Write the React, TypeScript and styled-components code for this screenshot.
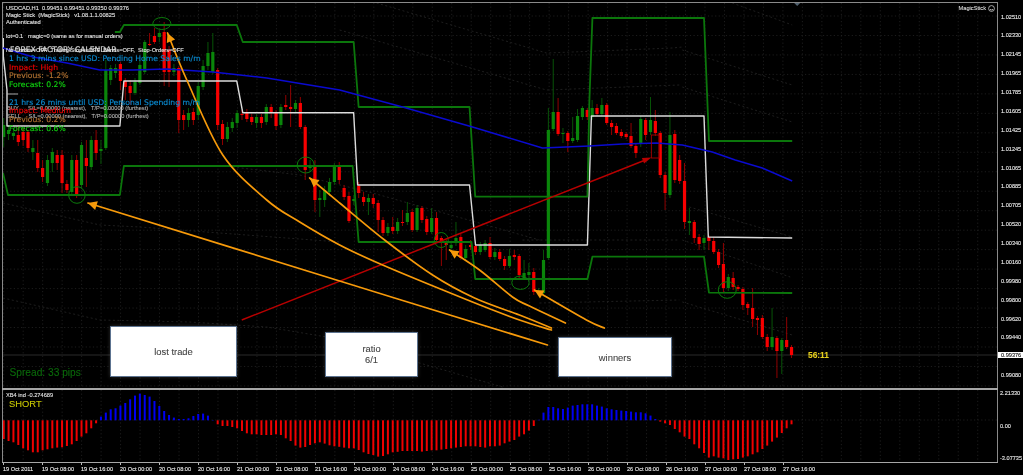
import React from "react";
import styled, { createGlobalStyle } from "styled-components";

const Global = createGlobalStyle`
  html, body { margin: 0; padding: 0; background: #000; overflow: hidden; }
  #root { width: 1023px; height: 475px; }
`;

const SANS = `"Liberation Sans", Arial, sans-serif`;
const WIDE = `"DejaVu Sans", Verdana, sans-serif`;
const STEP = 4.868;
const barX = (k: number) => 3.7 + STEP * k;

// colour, top of body, bottom of body, high, low
type C = [string, number, number, number?, number?];
const candles: C[] = [
  ["g",125,137,118,147],["g",130,134,125,140],["g",133,136,128,140],["r",135,142,125,146],["r",132,140,128,146],["r",132,148,130,152],["g",148,152,140,160],["r",153,168,140,172],
  ["r",168,177,160,182],["g",160,183,155,186],["g",152,163,148,172],["r",155,163,150,170],["r",155,183,150,193],["r",184,190,180,193],["g",160,192,155,194],["r",160,195,155,198],
  ["g",145,185,142,188],["r",158,166,140,187],["g",140,167,136,170],["r",140,153,130,160],["g",149,151,140,164],["g",70,148,60,150],["g",68,80,65,85],["g",68,73,64,78],
  ["r",64,81,62,90],["r",81,87,78,100],["r",86,93,80,105],["g",82,93,78,95],["g",65,83,60,85],["g",42,72,40,74],["r",44,45,33,46],["r",36,42,28,44],
  ["g",33,37,30,42],["r",32,72,22,86],["r",50,72,46,87],["g",68,72,64,76],["r",68,120,66,133],["r",115,120,110,130],["g",113,120,108,127],["r",112,120,108,125],
  ["g",86,115,82,120],["g",66,87,60,90],["g",53,66,42,70],["g",52,72,33,74],["r",70,125,68,130],["r",124,139,120,145],["g",127,139,122,142],["g",122,128,118,132],
  ["g",113,123,110,128],["r",114,115,110,120],["r",112,119,109,122],["r",117,122,114,125],["g",117,123,114,128],["r",117,123,114,128],["g",107,122,104,125],["r",107,113,104,118],
  ["r",113,126,110,130],["g",107,125,104,128],["r",105,107,95,110],["r",107,109,85,127],["g",103,109,100,112],["r",103,127,97,129],["r",127,170,125,180],["g",165,168,160,172],
  ["r",165,200,160,212],["g",198,200,190,217],["g",190,200,186,207],["g",182,192,178,196],["g",167,182,163,185],["r",165,180,162,184],["r",188,197,185,200],["r",196,221,192,223],
  ["g",199,201,195,205],["r",186,193,182,198],["r",197,202,192,206],["g",198,202,194,215],["r",198,204,194,208],["r",203,220,200,232],["r",220,233,217,236],["g",227,233,223,236],
  ["r",227,231,217,234],["g",222,231,218,234],["r",222,223,210,226],["g",213,222,202,225],["r",212,230,209,232],["g",208,230,205,232],["r",208,220,206,223],["r",219,232,216,235],
  ["g",218,232,208,234],["r",218,240,212,242],["r",238,243,236,266],["r",242,245,240,260],["g",245,248,242,252],["g",238,243,222,246],["r",237,258,234,260],["g",249,258,245,260],
  ["r",245,247,240,250],["r",246,252,244,255],["g",245,252,242,255],["g",243,250,240,252],["r",243,257,237,259],["g",252,257,248,260],["r",252,259,249,261],["r",259,266,256,270],
  ["g",256,266,249,268],["r",255,257,250,260],["r",256,275,254,278],["g",273,278,260,280],["g",272,275,263,278],["r",272,292,268,295],["g",291,293,288,296],["g",260,293,250,295],
  ["g",130,258,108,260],["g",112,129,59,131],["r",112,134,98,136],["g",133,134,128,143],["r",133,141,131,152],["g",138,141,117,143],["g",116,140,109,142],["g",108,117,106,120],
  ["r",110,117,108,120],["g",108,117,100,120],["r",108,114,104,116],["g",105,114,98,116],["r",105,123,103,125],["r",123,127,120,135],["r",126,133,123,135],["r",132,136,129,138],
  ["r",134,137,132,139],["r",136,146,123,148],["r",146,153,144,158],["g",119,144,116,147],["r",120,135,118,140],["g",120,132,97,135],["r",121,133,110,136],["r",133,175,131,178],
  ["r",175,193,172,210],["g",135,195,112,198],["r",134,180,130,183],["r",160,181,155,184],["r",181,222,163,229],["g",221,223,208,235],["r",222,238,220,243],["r",237,244,234,250],
  ["g",238,243,235,250],["r",237,241,235,250],["r",241,252,237,254],["r",252,265,249,268],["r",264,288,243,292],["g",277,288,274,291],["r",278,287,272,290],["r",287,289,285,291],
  ["r",289,305,287,310],["r",304,308,302,315],["r",308,319,288,327],["r",318,320,316,335],["r",318,337,315,339],["r",337,347,334,351],["g",337,347,308,350],["r",338,351,336,378],
  ["g",340,351,338,374],["r",340,347,317,349],["r",347,355,345,358],
];

// positive: blue, negative: red, in px from the zero line
const histogram: number[] = [
  -18.7,-20.7,-22,-24.7,-28,-30,-32,-32,-30,-29,-28,-27.3,-27,-25.7,-24,-20.7,-16.3,-13,-8,-3,
  3.7,7.7,11,12,14.7,17.3,21,24.7,26.7,25.3,23.7,19.3,14.3,9.3,5.3,2.7,1.3,1.3,2,4.3,6.3,6.7,4.7,0.3,
  -4,-5.7,-5.7,-6.7,-8,-10.7,-13,-14,-14,-14.7,-14.7,-14.7,-14,-14.7,-18,-20.7,-25.3,-27.3,-26.7,-24.7,-23,-22,-23.3,-25,-26,-26.5,
  -27.3,-28,-28,-29.7,-32,-33.7,-34.7,-36.3,-35.7,-34,-32,-31.5,-30.7,-30.7,-30.7,-30.7,-31.3,-30.7,-30,-30,-29.3,-28.7,-28,-27.3,-26.7,-26,-26,-26,-26.7,-27.3,-26,-26,-25.3,-23,-21.3,-19.7,-16.3,-14,-10.3,-5.7,
  0.5,7.7,13.3,13.3,12,11.3,12.7,14.7,15.3,16,16,16,14.7,13.7,12,11,10.3,9.7,9.3,8.7,8,8,7,4.7,1.3,
  -1.3,-3,-4.7,-8.7,-12,-16.3,-18.7,-24,-28,-32.7,-37.3,-36,-37.3,-38,-39.7,-39,-38.7,-37.3,-36,-34,-32,-28.7,-25.3,-21.3,-17.3,-12.7,-8,-4,
];

type P = [number, number];
const upperGreen: P[] = [[115,32],[120,32],[124,25],[237,25],[243,42],[354,42],[359,107],[470,107],[475.7,196.7],[588,196.7],[590,100],[593,18],[704.7,18],[709.7,141],[793,141]];
const lowerGreen: P[] = [[3,173],[8,195],[120,195],[124,166],[353,166],[359,242],[472,242],[475.7,279],[588,279],[593,256.7],[704.7,256.7],[709.7,292.7],[793,293]];
const whiteStep: P[] = [[3.3,38],[3.3,56],[7,90],[7,126],[120,126],[124,81],[237,81],[243,112.7],[354,112.7],[358,185],[470,185],[476,245],[588,245],[592,116],[704.7,116],[709,237],[793,238]];
const blueAverage: P[] = [[3,48],[33,57],[67,63],[100,70],[133,70],[167,69],[213,72],[267,78],[340,90],[403,107],[473,127],[543,148],[590,146],[623,144],[657,143],[683,145],[713,152],[736,160],[763,168],[793,181]];
const channels: P[][] = [
  [[377,3],[547,53],[573,52],[673,48],[683,47]],
  [[733,3],[793,25]],
  [[340,30],[547,90],[680,85]],
  [[683,50],[793,85]],
  [[683,87],[793,122]],
  [[3,203],[100,225],[140,227],[340,242]],
  [[3,298],[100,320],[190,322],[267,327],[333,338],[420,363],[503,387]],
  [[233,167],[300,175],[373,193],[540,240]],
  [[523,240],[680,240]],
  [[690,207],[793,237]],
  [[683,240],[791,277]],
  [[683,302],[793,335]],
  [[540,303],[680,300]],
];
const circles = [
  [162, 23.5, 9, 6],
  [77, 195, 8.3, 8.3],
  [306, 165, 8.5, 8],
  [441.7, 240, 7, 7.5],
  [521, 282.7, 8.7, 6.7],
  [728, 290, 9, 8.3],
];
const orangeArrows: P[][] = [
  [[167.7,33],[187,80],[223,155],[267,200],[300,222],[340,245],[383,265],[468,300],[520,320],[552,330]],
  [[310,178],[340,203],[385,240],[433,275],[475,298],[520,315],[552,328]],
  [[450,250],[480,270],[513,297],[530,306],[566,323]],
  [[535,290],[587,320],[605,328]],
  [[88,203],[340,281],[548,345]],
];
const prices = ["1.02510","1.02330","1.02145","1.01965","1.01785","1.01605","1.01425","1.01245","1.01065","1.00885","1.00705","1.00520","1.00340","1.00160","0.99980","0.99800","0.99620","0.99440","0.99260","0.99080"];
const times = ["19 Oct 2011","19 Oct 08:00","19 Oct 16:00","20 Oct 00:00","20 Oct 08:00","20 Oct 16:00","21 Oct 00:00","21 Oct 08:00","21 Oct 16:00","24 Oct 00:00","24 Oct 08:00","24 Oct 16:00","25 Oct 00:00","25 Oct 08:00","25 Oct 16:00","26 Oct 00:00","26 Oct 08:00","26 Oct 16:00","27 Oct 00:00","27 Oct 08:00","27 Oct 16:00"];

const pts = (p: P[]) => p.map((q) => q.join(",")).join(" ");
const smooth = (p: P[]) => {
  let d = `M${p[0][0]} ${p[0][1]}`;
  for (let i = 0; i < p.length - 1; i++) {
    const a = p[Math.max(i - 1, 0)], b = p[i], c = p[i + 1], e = p[Math.min(i + 2, p.length - 1)];
    d += ` C${(b[0] + (c[0] - a[0]) / 6).toFixed(1)} ${(b[1] + (c[1] - a[1]) / 6).toFixed(1)} ${(c[0] - (e[0] - b[0]) / 6).toFixed(1)} ${(c[1] - (e[1] - b[1]) / 6).toFixed(1)} ${c[0]} ${c[1]}`;
  }
  return d;
};
const head = (tip: P, next: P, size = 9, half = 4.5) => {
  const dx = next[0] - tip[0], dy = next[1] - tip[1], l = Math.hypot(dx, dy);
  const ux = dx / l, uy = dy / l;
  const bx = tip[0] + ux * size, by = tip[1] + uy * size;
  return `${tip[0]},${tip[1]} ${bx - uy * half},${by + ux * half} ${bx + uy * half},${by - ux * half}`;
};

const Window = styled.div`
  width: 1023px;
  height: 475px;
  box-sizing: border-box;
  padding: 2px 0 2px 2px;
  background: #000;
  display: flex;
  flex-direction: column;
  font-family: ${SANS};
  -webkit-text-stroke: 0.1px;
  filter: blur(0.35px);
`;
const PaneRow = styled.div<{ $h: number }>`
  display: flex;
  height: ${(p) => p.$h}px;
  flex: none;
`;
const Plot = styled.div<{ $top?: boolean }>`
  position: relative;
  width: 996px;
  box-sizing: border-box;
  border-left: 1px solid #8a8a8a;
  border-top: ${(p) => (p.$top ? "1px solid #8a8a8a" : "none")};
  border-right: 1px solid #8a8a8a;
  overflow: hidden;
`;
const Drawing = styled.svg`
  display: block;
  width: 100%;
  height: 100%;
`;
const PaneDivider = styled.div`
  height: 2px;
  flex: none;
  width: 996px;
  background: #a6a6a6;
`;
const PriceAxis = styled.div`
  position: relative;
  flex: 1;
  display: flex;
  flex-direction: column;
  padding-top: 8.5px;
  color: #ececec;
  font-size: 5.6px;
`;
const PriceLabel = styled.div`
  height: 19.47px;
  line-height: 13px;
  padding-left: 3px;
  white-space: nowrap;
`;
const PriceTag = styled.div`
  position: absolute;
  left: 0;
  top: 349.5px;
  width: 25px;
  height: 6px;
  background: #fff;
  color: #111;
  line-height: 6px;
  padding-left: 3px;
  box-sizing: border-box;
`;
const SubAxis = styled.div`
  flex: 1;
  display: flex;
  flex-direction: column;
  justify-content: space-between;
  color: #ececec;
  font-size: 5.6px;
  line-height: 6px;
  padding: 0 0 1px 2px;
  white-space: nowrap;
  overflow: hidden;
`;
const TimeAxis = styled.div`
  flex: none;
  display: flex;
  width: 996px;
  box-sizing: border-box;
  border-top: 1px solid #a6a6a6;
  padding: 2.5px 0 0 1px;
  color: #ececec;
  font-size: 5.6px;
  line-height: 7px;
`;
const TimeLabel = styled.div`
  position: relative;
  width: 39px;
  flex: none;
  white-space: nowrap;
  &::before {
    content: "";
    position: absolute;
    left: 0;
    top: -2.5px;
    width: 1px;
    height: 2px;
    background: #bbb;
  }
`;
const InfoBlock = styled.div`
  position: absolute;
  left: 3px;
  top: 1.5px;
  display: flex;
  flex-direction: column;
  color: #e4e4e4;
  font-size: 5.7px;
  line-height: 7px;
  white-space: pre;
`;
const InfoRow = styled.div<{ $skip?: number }>`
  margin-top: ${(p) => (p.$skip ?? 0) * 7}px;
`;
const CalendarBlock = styled.div`
  position: absolute;
  left: 6px;
  top: 43px;
  display: flex;
  flex-direction: column;
  font-family: ${WIDE};
  font-size: 7.65px;
  line-height: 8.75px;
  -webkit-text-stroke: 0.15px;
  white-space: pre;
`;
const CalendarTitle = styled.div`
  color: #dcdcdc;
  margin-left: 1px;
`;
const CalendarRow = styled.div<{ $color: string; $gap?: boolean }>`
  color: ${(p) => p.$color};
  margin-top: ${(p) => (p.$gap ? "8.75px" : "0")};
`;
const OrderBlock = styled.div`
  position: absolute;
  left: 4px;
  top: 102px;
  display: flex;
  flex-direction: column;
  color: #b4b4b4;
  font-size: 5.7px;
  line-height: 7.5px;
  white-space: pre;
`;
const Expert = styled.div`
  position: absolute;
  right: 2px;
  top: 2px;
  display: flex;
  align-items: center;
  gap: 2px;
  color: #dcdcdc;
  font-size: 5.7px;
  line-height: 7px;
`;
const Spread = styled.div`
  position: absolute;
  left: 6.5px;
  top: 364px;
  color: #0a6a0a;
  font-size: 10.2px;
  line-height: 12px;
`;
const Countdown = styled.div`
  position: absolute;
  left: 805px;
  top: 347px;
  color: #e6cf1e;
  font-size: 8.4px;
  font-weight: 700;
  line-height: 10px;
`;
const NoteBox = styled.div<{ $l: number; $t: number; $w: number; $h: number }>`
  position: absolute;
  left: ${(p) => p.$l}px;
  top: ${(p) => p.$t}px;
  width: ${(p) => p.$w}px;
  height: ${(p) => p.$h}px;
  box-sizing: border-box;
  display: flex;
  align-items: center;
  justify-content: center;
  text-align: center;
  background: #fff;
  border: 1px solid #5c7390;
  box-shadow: 0 0 4px rgba(120, 120, 120, 0.35);
  color: #444;
  font-size: 9.4px;
  line-height: 11px;
`;
const IndicatorTitle = styled.div`
  position: absolute;
  left: 3px;
  top: 1.5px;
  color: #e0e0e0;
  font-size: 5.7px;
  line-height: 7px;
`;
const Signal = styled.div`
  position: absolute;
  left: 6px;
  top: 8px;
  color: #c8c800;
  font-size: 9.4px;
  line-height: 11px;
`;

const GridLines = ({ y0, y1, rows }: { y0: number; y1: number; rows: number[] }) => (
  <g stroke="#242424" strokeWidth="0.8" strokeDasharray="1.2 2.4">
    {Array.from({ length: 51 }, (_, i) => (
      <line key={i} x1={3.7 + 19.5 * i} x2={3.7 + 19.5 * i} y1={y0} y2={y1} />
    ))}
    {rows.map((y) => (
      <line key={y} x1={3} x2={998} y1={y} y2={y} />
    ))}
  </g>
);

const Candles = () => (
  <g>
    {candles.map(([c, top, bot, hi, lo], k) => {
      const x = barX(k);
      const col = c === "r" ? "#f80000" : "#0a860a";
      const wick = c === "r" ? "#a00000" : "#085c08";
      return (
        <g key={k}>
          <line x1={x} x2={x} y1={hi ?? top - 3} y2={lo ?? bot + 3} stroke={wick} strokeWidth="0.9" />
          <rect x={x - 1.6} y={top} width={3.2} height={Math.max(bot - top, 1)} fill={col} />
        </g>
      );
    })}
  </g>
);

const MainDrawing = () => (
  <Drawing viewBox="3 3 995 385" preserveAspectRatio="none">
    <GridLines y0={3} y1={388} rows={prices.map((_, i) => 16 + 19.47 * i)} />
    <g fill="none" stroke="#262626" strokeWidth="0.8" strokeDasharray="2 2.5">
      {channels.map((c, i) => (
        <polyline key={i} points={pts(c)} />
      ))}
    </g>
    <line x1={3} x2={998} y1={355} y2={355} stroke="#2a2a2a" strokeWidth="1" />
    <polygon points="795,3 801,3 798,6" fill="#50606e" />
    <Candles />
    <g fill="none" strokeLinejoin="round">
      <polyline points={pts(whiteStep)} stroke="#dcdcdc" strokeWidth="1.4" />
      <line x1={7} y1={94} x2={18} y2={94} stroke="#bbb" strokeWidth="0.9" />
      <polyline points={pts(upperGreen)} stroke="#0b760b" strokeWidth="1.8" />
      <polyline points={pts(lowerGreen)} stroke="#0b760b" strokeWidth="1.8" />
      <polyline points={pts(blueAverage)} stroke="#0a0ad0" strokeWidth="1.5" />
    </g>
    <g fill="none" stroke="#0b7a0b" strokeWidth="1">
      {circles.map(([cx, cy, rx, ry]) => (
        <ellipse key={cx} cx={cx} cy={cy} rx={rx} ry={ry} />
      ))}
    </g>
    <line x1={242} y1={320} x2={646} y2={160} stroke="#b80000" strokeWidth="1.5" />
    <polygon points={head([652, 157.5], [242, 320], 9, 3)} fill="#b80000" />
    <rect x={652} y={135} width={8} height={23} fill="none" stroke="#a80000" strokeWidth="0.9" />
    <g fill="none" stroke="#f79a0a" strokeWidth="1.7" strokeLinecap="round">
      {orangeArrows.map((a, i) => (
        <path key={i} d={smooth(a)} />
      ))}
    </g>
    <g fill="#f79a0a">
      {orangeArrows.map((a, i) => (
        <polygon key={i} points={head(a[0], a[1])} />
      ))}
    </g>
  </Drawing>
);

const IndicatorDrawing = () => (
  <Drawing viewBox="3 390 995 72" preserveAspectRatio="none">
    <GridLines y0={390} y1={462} rows={[420]} />
    {histogram.map((v, k) => (
      <rect
        key={k}
        x={barX(k) - 1}
        y={v > 0 ? 420.3 - v : 420.3}
        width={2}
        height={Math.abs(v)}
        fill={v > 0 ? "#0000f0" : "#f00000"}
      />
    ))}
  </Drawing>
);

export default function App() {
  return (
    <>
      <Global />
      <Window>
        <PaneRow $h={386}>
          <Plot $top>
            <MainDrawing />
            <InfoBlock>
              <InfoRow>{"USDCAD,H1  0.99451 0.99451 0.99350 0.99376"}</InfoRow>
              <InfoRow>{"Magic Stick  (MagicStick)   v1.08.1.1.00825"}</InfoRow>
              <InfoRow>Authenticated</InfoRow>
              <InfoRow $skip={1}>{"lot=0.1   magic=0 (same as for manual orders)"}</InfoRow>
              <InfoRow $skip={1}>{"No-Trades=OFF  Trailing-Stops=OFF  Bands=OFF,  Stop-Orders=OFF"}</InfoRow>
            </InfoBlock>
            <OrderBlock>
              <div>{"BUY      S/L=0.00000 (nearest),   T/P=0.00000 (furthest)"}</div>
              <div>{"SELL     S/L=0.00000 (nearest),   T/P=0.00000 (furthest)"}</div>
            </OrderBlock>
            <CalendarBlock>
              <CalendarTitle>FOREX FACTORY CALENDAR</CalendarTitle>
              <CalendarRow $color="#0a8ad0">1 hrs 3 mins since USD: Pending Home Sales m/m</CalendarRow>
              <CalendarRow $color="#f00000">Impact: High</CalendarRow>
              <CalendarRow $color="#b07030">Previous: -1.2%</CalendarRow>
              <CalendarRow $color="#10d010">Forecast: 0.2%</CalendarRow>
              <CalendarRow $color="#0a8ad0" $gap>21 hrs 26 mins until USD: Personal Spending m/m</CalendarRow>
              <CalendarRow $color="#f00000">Impact: Medium</CalendarRow>
              <CalendarRow $color="#b07030">Previous: 0.2%</CalendarRow>
              <CalendarRow $color="#10d010">Forecast: 0.6%</CalendarRow>
            </CalendarBlock>
            <Expert>
              MagicStick
              <svg width="7" height="7" viewBox="0 0 7 7" fill="none" stroke="#cfcfcf" strokeWidth="0.8">
                <circle cx="3.5" cy="3.5" r="2.9" />
                <path d="M2 4.3 Q3.5 5.6 5 4.3" />
              </svg>
            </Expert>
            <Spread>Spread: 33 pips</Spread>
            <Countdown>56:11</Countdown>
            <NoteBox $l={107} $t={323} $w={127} $h={51}>lost trade</NoteBox>
            <NoteBox $l={322} $t={328.5} $w={93} $h={45.5}>ratio<br />6/1</NoteBox>
            <NoteBox $l={555} $t={334} $w={114} $h={40}>winners</NoteBox>
          </Plot>
          <PriceAxis>
            {prices.map((p) => (
              <PriceLabel key={p}>{p}</PriceLabel>
            ))}
            <PriceTag>0.99376</PriceTag>
          </PriceAxis>
        </PaneRow>
        <PaneDivider />
        <PaneRow $h={72}>
          <Plot>
            <IndicatorDrawing />
            <IndicatorTitle>XB4 ind -0.274689</IndicatorTitle>
            <Signal>SHORT</Signal>
          </Plot>
          <SubAxis>
            <div>2.21330</div>
            <div>0.00</div>
            <div>-3.07735</div>
          </SubAxis>
        </PaneRow>
        <TimeAxis>
          {times.map((t) => (
            <TimeLabel key={t}>{t}</TimeLabel>
          ))}
        </TimeAxis>
      </Window>
    </>
  );
}
